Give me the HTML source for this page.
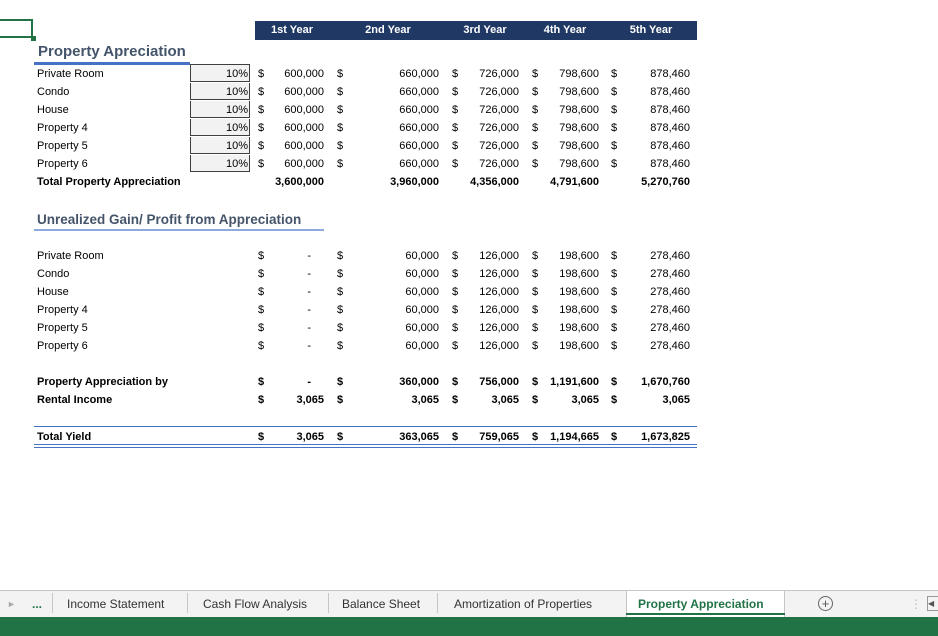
<!DOCTYPE html>
<html><head><meta charset="utf-8"><style>
body{margin:0;width:938px;height:636px;overflow:hidden;background:#fff;font-family:"Liberation Sans",sans-serif;font-size:11px;color:#000;position:relative}
.r{position:absolute;left:0;width:938px;height:18px;line-height:18px}
.r span{position:absolute;top:0;white-space:nowrap}
.l{left:37px}
.d1{left:258px}.d2{left:337px}.d3{left:452px}.d4{left:532px}.d5{left:611px}
.v1{left:264px;width:60px;text-align:right}
.v2{left:370px;width:69px;text-align:right}
.v3{left:460px;width:59px;text-align:right}
.v4{left:540px;width:59px;text-align:right}
.v5{left:620px;width:70px;text-align:right}
.dash{left:274px;width:37px;text-align:right}
.p{left:190px;width:60px;height:17px;background:#f2f2f2;border:1px solid #3f3f3f;border-top:none;text-align:right;box-sizing:border-box;padding-right:1px}
.b{font-weight:bold}
.hdr{position:absolute;left:255px;top:21px;width:442px;height:19px;background:#203864;color:#fff;font-weight:bold}
.hdr span{position:absolute;top:3px;transform:translateX(-50%)}
.title{position:absolute;font-weight:bold;color:#44546a}
</style></head><body>
<div style="position:absolute;left:-2px;top:19px;width:35px;height:19px;border:2px solid #217346;box-sizing:border-box"></div>
<div style="position:absolute;left:31px;top:36px;width:5px;height:5px;background:#217346"></div>
<div class="hdr"><span style="left:37px">1st Year</span><span style="left:133px">2nd Year</span><span style="left:230px">3rd Year</span><span style="left:310px">4th Year</span><span style="left:396px">5th Year</span></div>
<div class="title" style="left:38px;top:43px;font-size:15px">Property Apreciation</div>
<div style="position:absolute;left:34px;top:62px;width:156px;height:3px;background:#4472c4"></div>
<div style="position:absolute;left:190px;top:64px;width:60px;height:1px;background:#3f3f3f"></div>

<div class="r" style="top:65px"><span class="l">Private Room</span><span class="p">10%</span><span class="d1">$</span><span class="v1">600,000</span><span class="d2">$</span><span class="v2">660,000</span><span class="d3">$</span><span class="v3">726,000</span><span class="d4">$</span><span class="v4">798,600</span><span class="d5">$</span><span class="v5">878,460</span></div>
<div class="r" style="top:83px"><span class="l">Condo</span><span class="p">10%</span><span class="d1">$</span><span class="v1">600,000</span><span class="d2">$</span><span class="v2">660,000</span><span class="d3">$</span><span class="v3">726,000</span><span class="d4">$</span><span class="v4">798,600</span><span class="d5">$</span><span class="v5">878,460</span></div>
<div class="r" style="top:101px"><span class="l">House</span><span class="p">10%</span><span class="d1">$</span><span class="v1">600,000</span><span class="d2">$</span><span class="v2">660,000</span><span class="d3">$</span><span class="v3">726,000</span><span class="d4">$</span><span class="v4">798,600</span><span class="d5">$</span><span class="v5">878,460</span></div>
<div class="r" style="top:119px"><span class="l">Property 4</span><span class="p">10%</span><span class="d1">$</span><span class="v1">600,000</span><span class="d2">$</span><span class="v2">660,000</span><span class="d3">$</span><span class="v3">726,000</span><span class="d4">$</span><span class="v4">798,600</span><span class="d5">$</span><span class="v5">878,460</span></div>
<div class="r" style="top:137px"><span class="l">Property 5</span><span class="p">10%</span><span class="d1">$</span><span class="v1">600,000</span><span class="d2">$</span><span class="v2">660,000</span><span class="d3">$</span><span class="v3">726,000</span><span class="d4">$</span><span class="v4">798,600</span><span class="d5">$</span><span class="v5">878,460</span></div>
<div class="r" style="top:155px"><span class="l">Property 6</span><span class="p">10%</span><span class="d1">$</span><span class="v1">600,000</span><span class="d2">$</span><span class="v2">660,000</span><span class="d3">$</span><span class="v3">726,000</span><span class="d4">$</span><span class="v4">798,600</span><span class="d5">$</span><span class="v5">878,460</span></div>
<div class="r b" style="top:173px"><span class="l">Total Property Appreciation</span><span class="v1">3,600,000</span><span class="v2">3,960,000</span><span class="v3">4,356,000</span><span class="v4">4,791,600</span><span class="v5">5,270,760</span></div>

<div class="title" style="left:37px;top:212px;font-size:13.5px">Unrealized Gain/ Profit from Appreciation</div>
<div style="position:absolute;left:34px;top:229px;width:290px;height:2px;background:#8ea9db"></div>

<div class="r" style="top:247px"><span class="l">Private Room</span><span class="d1">$</span><span class="dash">-</span><span class="d2">$</span><span class="v2">60,000</span><span class="d3">$</span><span class="v3">126,000</span><span class="d4">$</span><span class="v4">198,600</span><span class="d5">$</span><span class="v5">278,460</span></div>
<div class="r" style="top:265px"><span class="l">Condo</span><span class="d1">$</span><span class="dash">-</span><span class="d2">$</span><span class="v2">60,000</span><span class="d3">$</span><span class="v3">126,000</span><span class="d4">$</span><span class="v4">198,600</span><span class="d5">$</span><span class="v5">278,460</span></div>
<div class="r" style="top:283px"><span class="l">House</span><span class="d1">$</span><span class="dash">-</span><span class="d2">$</span><span class="v2">60,000</span><span class="d3">$</span><span class="v3">126,000</span><span class="d4">$</span><span class="v4">198,600</span><span class="d5">$</span><span class="v5">278,460</span></div>
<div class="r" style="top:301px"><span class="l">Property 4</span><span class="d1">$</span><span class="dash">-</span><span class="d2">$</span><span class="v2">60,000</span><span class="d3">$</span><span class="v3">126,000</span><span class="d4">$</span><span class="v4">198,600</span><span class="d5">$</span><span class="v5">278,460</span></div>
<div class="r" style="top:319px"><span class="l">Property 5</span><span class="d1">$</span><span class="dash">-</span><span class="d2">$</span><span class="v2">60,000</span><span class="d3">$</span><span class="v3">126,000</span><span class="d4">$</span><span class="v4">198,600</span><span class="d5">$</span><span class="v5">278,460</span></div>
<div class="r" style="top:337px"><span class="l">Property 6</span><span class="d1">$</span><span class="dash">-</span><span class="d2">$</span><span class="v2">60,000</span><span class="d3">$</span><span class="v3">126,000</span><span class="d4">$</span><span class="v4">198,600</span><span class="d5">$</span><span class="v5">278,460</span></div>

<div class="r b" style="top:373px"><span class="l">Property Appreciation by</span><span class="d1">$</span><span class="dash">-</span><span class="d2">$</span><span class="v2">360,000</span><span class="d3">$</span><span class="v3">756,000</span><span class="d4">$</span><span class="v4">1,191,600</span><span class="d5">$</span><span class="v5">1,670,760</span></div>
<div class="r b" style="top:391px"><span class="l">Rental Income</span><span class="d1">$</span><span class="v1">3,065</span><span class="d2">$</span><span class="v2">3,065</span><span class="d3">$</span><span class="v3">3,065</span><span class="d4">$</span><span class="v4">3,065</span><span class="d5">$</span><span class="v5">3,065</span></div>

<div style="position:absolute;left:34px;top:426px;width:663px;height:1px;background:#4472c4"></div>
<div class="r b" style="top:428px"><span class="l">Total Yield</span><span class="d1">$</span><span class="v1">3,065</span><span class="d2">$</span><span class="v2">363,065</span><span class="d3">$</span><span class="v3">759,065</span><span class="d4">$</span><span class="v4">1,194,665</span><span class="d5">$</span><span class="v5">1,673,825</span></div>
<div style="position:absolute;left:34px;top:444px;width:663px;height:1px;background:#4472c4"></div>
<div style="position:absolute;left:34px;top:447px;width:663px;height:1px;background:#4472c4"></div>

<div style="position:absolute;left:0;top:590px;width:938px;height:27px;background:#f3f3f3;border-top:1px solid #c6c6c6;box-sizing:border-box"></div>
<div style="position:absolute;left:626px;top:590px;width:159px;height:27px;background:#fff;border:1px solid #c6c6c6;border-bottom:none;box-sizing:border-box"></div>
<div style="position:absolute;left:626px;top:613px;width:159px;height:2px;background:#217346"></div>
<div style="position:absolute;left:0;top:617px;width:938px;height:19px;background:#217346"></div>
<div style="position:absolute;top:596px;font-size:12px;color:#333;line-height:16px;width:938px;height:16px">
<span style="position:absolute;left:7px;color:#aaa;font-size:9px">&#9658;</span>
<span style="position:absolute;left:32px;font-weight:bold;color:#217346">...</span>
<span style="position:absolute;left:52px;top:-3px;width:1px;height:20px;background:#c6c6c6"></span>
<span style="position:absolute;left:67px">Income Statement</span>
<span style="position:absolute;left:187px;top:-3px;width:1px;height:20px;background:#c6c6c6"></span>
<span style="position:absolute;left:203px">Cash Flow Analysis</span>
<span style="position:absolute;left:328px;top:-3px;width:1px;height:20px;background:#c6c6c6"></span>
<span style="position:absolute;left:342px">Balance Sheet</span>
<span style="position:absolute;left:437px;top:-3px;width:1px;height:20px;background:#c6c6c6"></span>
<span style="position:absolute;left:454px">Amortization of Properties</span>
<span style="position:absolute;left:638px;font-weight:bold;color:#217346">Property Appreciation</span>
<span style="position:absolute;left:818px;top:0;width:13px;height:13px;border:1px solid #666;border-radius:50%;text-align:center;line-height:13px;font-size:13px;color:#555">+</span>
<span style="position:absolute;left:910px;color:#bbb">&#8942;</span>
<span style="position:absolute;left:927px;top:0;width:14px;height:13px;border:1px solid #999;font-size:8px;line-height:13px;color:#555">&#9664;</span>
</div>
</body></html>
